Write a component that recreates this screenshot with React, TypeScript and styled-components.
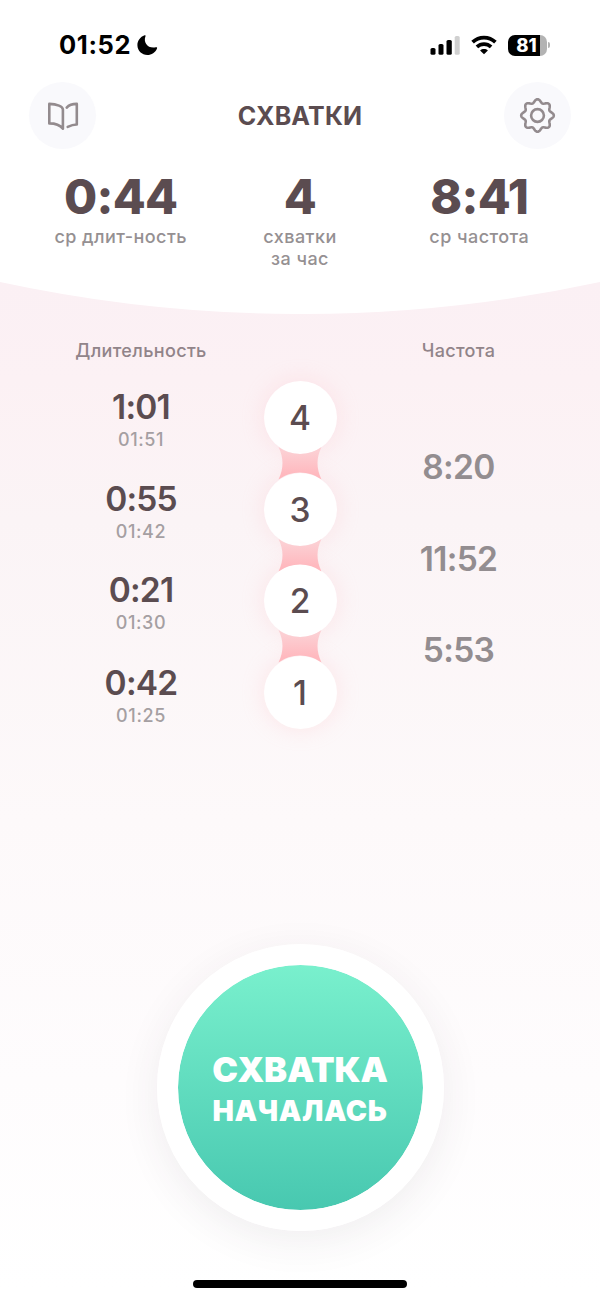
import React from 'react';
import styled, { createGlobalStyle } from 'styled-components';

const GlobalStyle = createGlobalStyle`
  * { box-sizing: border-box; }
  body { margin: 0; background: #fff; }
`;

const Screen = styled.main`
  width: 600px;
  height: 1300px;
  display: flex;
  flex-direction: column;
  overflow: hidden;
  font-family: Inter, 'Liberation Sans', sans-serif;
  color: #5b4c50;
  background: linear-gradient(180deg, #fbf0f4 282px, #fcf1f4 380px, #fbf4f6 520px, #fdf9fa 820px, #fefcfd 1080px, #fff 1290px);
`;

const Header = styled.header`
  height: 282px;
  flex: none;
  background: #fff;
`;

const StatusBar = styled.div`
  height: 82px;
  padding: 8px 50px 0 59px;
  display: flex;
  align-items: center;
  justify-content: space-between;
  color: #000;
`;

const StatusGroup = styled.div<{ $gap: number }>`
  display: flex;
  align-items: center;
  gap: ${(p) => p.$gap}px;
`;

const Clock = styled.span`
  font-size: 25.5px;
  line-height: 30px;
  font-weight: 700;
  letter-spacing: 0.6px;
`;

const Battery = styled.div`
  display: flex;
  align-items: center;
  gap: 1px;
`;

const BatteryBody = styled.div<{ $level: number }>`
  width: 39px;
  height: 21px;
  padding-right: 2px;
  border-radius: 7px;
  background: linear-gradient(90deg, #000 ${(p) => p.$level}%, #b3b3b3 ${(p) => p.$level}%);
  color: #fff;
  font-size: 18.5px;
  font-weight: 800;
  line-height: 21px;
  text-align: center;
`;

const BatteryTip = styled.div`
  width: 2px;
  height: 6px;
  border-radius: 0 2px 2px 0;
  background: #b3b3b3;
`;

const NavBar = styled.nav`
  height: 67px;
  padding: 0 29px;
  display: flex;
  align-items: center;
  justify-content: space-between;
`;

const RoundButton = styled.button`
  width: 67px;
  height: 67px;
  padding: 0;
  border: 0;
  border-radius: 50%;
  background: #f9f9fc;
  display: flex;
  align-items: center;
  justify-content: center;
`;

const Title = styled.h1`
  margin: 0;
  font-size: 25px;
  line-height: 30px;
  font-weight: 700;
  letter-spacing: 0.2px;
`;

const Stats = styled.section`
  padding: 18px 31px 0;
  display: grid;
  grid-template-columns: repeat(3, 1fr);
  text-align: center;
`;

const StatValue = styled.div`
  font-size: 48px;
  line-height: 59px;
  font-weight: 800;
  letter-spacing: -0.7px;
`;

const StatLabel = styled.div`
  font-size: 18px;
  line-height: 22px;
  font-weight: 500;
  letter-spacing: 0.45px;
  color: #959092;
  white-space: pre-line;
`;

const Curve = styled.svg`
  display: block;
  flex: none;
`;

const Timeline = styled.section`
  display: grid;
  grid-template-columns: 160px 158px 159px;
  padding: 26px 0 0 61px;
  text-align: center;
`;

const ColumnTitle = styled.div`
  height: 22px;
  font-size: 18px;
  line-height: 22px;
  font-weight: 500;
  letter-spacing: 0.35px;
  color: #918489;
`;

const Durations = styled.div`
  padding-top: 25px;
  display: flex;
  flex-direction: column;
`;

const DurationItem = styled.div`
  height: 91.6px;

  &:last-child {
    padding-top: 1px;
  }
`;

const Duration = styled.div`
  font-size: 33.5px;
  line-height: 41px;
  font-weight: 600;
  letter-spacing: -0.8px;
`;

const StartTime = styled.div`
  margin-top: 1px;
  font-size: 18px;
  line-height: 22px;
  font-weight: 500;
  letter-spacing: 0.6px;
  color: #a59fa2;
`;

const Chain = styled.div`
  padding-top: 19px;
  display: flex;
  flex-direction: column;
  align-items: center;
`;

const Bead = styled.div`
  width: 73px;
  height: 73px;
  flex: none;
  z-index: 1;
  border-radius: 50%;
  background: #fff;
  box-shadow: 0 0 22px rgba(255, 190, 195, 0.3);
  font-size: 33.5px;
  line-height: 74px;
  font-weight: 500;
`;

const Link = styled.svg`
  display: block;
  flex: none;
  z-index: 2;
  margin: -8px 0;
`;

const Intervals = styled.div`
  padding-top: 58px;
`;

const Interval = styled.div`
  height: 91.6px;
  font-size: 33.5px;
  line-height: 94px;
  font-weight: 600;
  letter-spacing: -0.7px;
  color: #938d90;
`;

const StartButton = styled.button`
  width: 287px;
  height: 287px;
  flex: none;
  margin: auto auto 49px;
  padding: 5px 0 0;
  border: 21px solid #fff;
  border-radius: 50%;
  background: linear-gradient(180deg, #79f0cd, #48c8b0) padding-box;
  box-shadow: 0 10px 40px rgba(70, 50, 60, 0.08);
  color: #fff;
  font-family: inherit;
  font-weight: 900;
  display: flex;
  flex-direction: column;
  align-items: center;
  justify-content: center;
`;

const ButtonLine = styled.span<{ $size: number; $height: number; $spacing: number }>`
  font-size: ${(p) => p.$size}px;
  line-height: ${(p) => p.$height}px;
  letter-spacing: ${(p) => p.$spacing}px;
`;

const HomeIndicator = styled.div`
  width: 214px;
  height: 8px;
  flex: none;
  margin: 0 auto 12px;
  border-radius: 4px;
  background: #000;
`;

const stats = [
  { value: '0:44', label: 'ср длит-ность' },
  { value: '4', label: 'схватки\nза час' },
  { value: '8:41', label: 'ср частота' },
];

const contractions = [
  { n: 4, duration: '1:01', start: '01:51' },
  { n: 3, duration: '0:55', start: '01:42' },
  { n: 2, duration: '0:21', start: '01:30' },
  { n: 1, duration: '0:42', start: '01:25' },
];

const intervals = ['8:20', '11:52', '5:53'];

// Eight-lobed outline sampled from a sinusoidal radius.
const gearPath = (() => {
  const points: string[] = [];
  for (let i = 0; i < 128; i++) {
    const a = (i / 128) * Math.PI * 2;
    const r = 14.6 + 1.7 * Math.cos(8 * a);
    points.push(`${(18.5 + r * Math.sin(a)).toFixed(2)} ${(18.5 - r * Math.cos(a)).toFixed(2)}`);
  }
  return `M${points.join('L')}Z`;
})();

const MoonIcon = () => (
  <svg width="21" height="20" viewBox="0 0 21 20">
    <path d="M7.600.3C8.200 0 8.800.5 8.500 1.200 6 7.500 11 14 18.800 12.300 19.800 12.100 20.400 12.600 20 13.400 18.400 17.400 14.600 19.900 10.400 19.900 4.900 19.900.4 15.700.4 10.200.4 5.800 3.200 1.900 7.600.3Z" fill="#000" />
  </svg>
);

const SignalIcon = () => (
  <svg width="30" height="19" viewBox="0 0 30 19">
    <rect x="0.500" y="12" width="5" height="6.800" rx="1.600" />
    <rect x="8.500" y="8" width="5" height="10.800" rx="1.600" />
    <rect x="16.500" y="4" width="5.300" height="14.800" rx="1.600" />
    <rect x="24.700" y="0" width="5" height="18.800" rx="1.600" fill="#d0d0d0" />
  </svg>
);

const WifiIcon = () => (
  <svg width="26" height="20" viewBox="0 0 26 20" fill="none" stroke="#000" strokeWidth="3.700">
    <path d="M1.600 7.200C8 1 18 1 24.400 7.200" />
    <path d="M5.900 11.900C10 8.100 16 8.100 20.100 11.900" />
    <path d="M13 19.300 9.100 15.500C11.300 13.600 14.700 13.600 16.900 15.500Z" fill="#000" stroke="none" />
  </svg>
);

const BookIcon = () => (
  <svg width="32" height="30" viewBox="0 0 32 30" fill="none" stroke="#938b8e" strokeWidth="2.600" strokeLinecap="round" strokeLinejoin="round">
    <path d="M15.900 27.700V8.500C15.900 5.500 10 2.900 2.300 2.900V22.400C8.500 22.400 13 24 15.900 27.700Z" />
    <path d="M19.700 6.600C22 4 25.500 2.900 29.800 2.900V23.500C26 23.500 23.500 24.500 20.700 25.900" />
  </svg>
);

const GearIcon = () => (
  <svg width="37" height="37" viewBox="0 0 37 37" fill="none" stroke="#938b8e" strokeWidth="2.600" strokeLinejoin="round">
    <path d={gearPath} />
    <circle cx="18.500" cy="18.500" r="6.400" />
  </svg>
);

const ChainLink = () => (
  <Link width="44" height="34.500" viewBox="0 0 44 34.500">
    <defs>
      <linearGradient id="link" x1="0" y1="0" x2="0" y2="1">
        <stop offset="0.150" stopColor="#fccfd3" />
        <stop offset="0.850" stopColor="#ffb8be" />
      </linearGradient>
    </defs>
    <path d="M0.500 1Q8.500 17.250 0.500 33.500A36.500 36.500 0 0 1 43.500 33.500Q35.500 17.250 43.500 1A36.500 36.500 0 0 1 0.500 1Z" fill="url(#link)" />
  </Link>
);

export default function App() {
  return (
    <Screen>
      <GlobalStyle />
      <Header>
        <StatusBar>
          <StatusGroup $gap={6}>
            <Clock>01:52</Clock>
            <MoonIcon />
          </StatusGroup>
          <StatusGroup $gap={11}>
            <SignalIcon />
            <WifiIcon />
            <Battery>
              <BatteryBody $level={81}>81</BatteryBody>
              <BatteryTip />
            </Battery>
          </StatusGroup>
        </StatusBar>
        <NavBar>
          <RoundButton aria-label="Справка"><BookIcon /></RoundButton>
          <Title>СХВАТКИ</Title>
          <RoundButton aria-label="Настройки"><GearIcon /></RoundButton>
        </NavBar>
        <Stats>
          {stats.map((s) => (
            <div key={s.label}>
              <StatValue>{s.value}</StatValue>
              <StatLabel>{s.label}</StatLabel>
            </div>
          ))}
        </Stats>
      </Header>
      <Curve width="600" height="32" viewBox="0 0 600 32">
        <path d="M0-1V0A1422 1422 0 0 0 600 0V-1Z" fill="#fff" />
      </Curve>
      <Timeline>
        <div>
          <ColumnTitle>Длительность</ColumnTitle>
          <Durations>
            {contractions.map((c) => (
              <DurationItem key={c.n}>
                <Duration>{c.duration}</Duration>
                <StartTime>{c.start}</StartTime>
              </DurationItem>
            ))}
          </Durations>
        </div>
        <div>
          <ColumnTitle />
          <Chain>
            {contractions.map((c, i) => (
              <React.Fragment key={c.n}>
                {i > 0 && <ChainLink />}
                <Bead>{c.n}</Bead>
              </React.Fragment>
            ))}
          </Chain>
        </div>
        <div>
          <ColumnTitle>Частота</ColumnTitle>
          <Intervals>
            {intervals.map((t) => (
              <Interval key={t}>{t}</Interval>
            ))}
          </Intervals>
        </div>
      </Timeline>
      <StartButton>
        <ButtonLine $size={34.500} $height={42} $spacing={-0.2}>СХВАТКА</ButtonLine>
        <ButtonLine $size={28.500} $height={40} $spacing={0.6}>НАЧАЛАСЬ</ButtonLine>
      </StartButton>
      <HomeIndicator />
    </Screen>
  );
}
